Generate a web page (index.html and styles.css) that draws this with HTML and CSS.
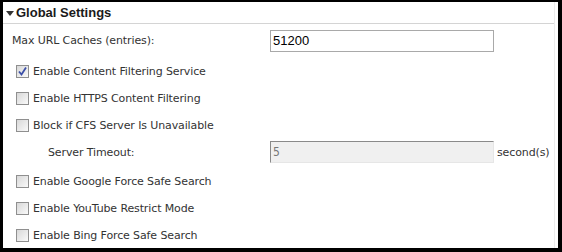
FILE: index.html
```html
<!DOCTYPE html>
<html>
<head>
<meta charset="utf-8">
<link rel="stylesheet" href="styles.css">
</head>
<body>
<div class="frame">
  <div class="panel">
    <div class="header"><span class="caret"></span>Global Settings</div>
    <div class="rows">
      <div class="row row-input">
        <label class="label">Max URL Caches (entries):</label>
        <input class="field" type="text" value="51200">
      </div>
      <div class="row row-first"><span class="cb"><svg width="11" height="11" viewBox="0 0 11 11"><path d="M2 5.5 L4.5 8.5 L9 1.5" fill="none" stroke="#3b4fa8" stroke-width="1.8"/></svg></span><span>Enable Content Filtering Service</span></div>
      <div class="row"><span class="cb"></span><span>Enable HTTPS Content Filtering</span></div>
      <div class="row"><span class="cb"></span><span>Block if CFS Server Is Unavailable</span></div>
      <div class="row row-input row-timeout">
        <label class="label label-sub">Server Timeout:</label>
        <input class="field field-disabled" type="text" value="5" disabled>
        <span class="unit">second(s)</span>
      </div>
      <div class="row"><span class="cb"></span><span>Enable Google Force Safe Search</span></div>
      <div class="row"><span class="cb"></span><span>Enable YouTube Restrict Mode</span></div>
      <div class="row"><span class="cb"></span><span>Enable Bing Force Safe Search</span></div>
    </div>
  </div>
</div>
</body>
</html>
```
FILE: styles.css
```css
html, body {
  margin: 0;
  padding: 0;
  background: #000;
}
.frame {
  width: 562px;
  height: 252px;
  box-sizing: border-box;
  border-style: solid;
  border-color: #000;
  border-width: 2px 4px 4px 3px;
  background: #fff;
  overflow: hidden;
}
.panel {
  height: 100%;
  border-right: 1px solid #ececec;
  margin-right: 3px;
  font-family: "DejaVu Sans", sans-serif;
  font-size: 11px;
  letter-spacing: -0.12px;
  color: #333;
}
.header {
  height: 21px;
  border-bottom: 1px solid #d4d4d4;
  display: flex;
  align-items: center;
  padding-left: 3px;
  font-family: "Liberation Sans", Arial, sans-serif;
  font-weight: bold;
  font-size: 13px;
  letter-spacing: 0;
  color: #1a1a1a;
}
.caret {
  width: 0;
  height: 0;
  border-left: 4px solid transparent;
  border-right: 4px solid transparent;
  border-top: 5px solid #333;
  margin-right: 2px;
  margin-top: 1px;
}
.rows {
  display: flex;
  flex-direction: column;
}
.row {
  height: 27px;
  display: flex;
  align-items: center;
  padding-left: 13px;
}
.row-first {
  margin-top: 1px;
}
.row-input {
  height: 33px;
  padding-left: 9px;
}
.row-timeout {
  height: 29px;
  padding-bottom: 3px;
  box-sizing: border-box;
}
.label {
  width: 258px;
}
.label-sub {
  padding-left: 36px;
  box-sizing: border-box;
}
.field {
  width: 224px;
  height: 22px;
  box-sizing: border-box;
  border: 1px solid #a9a9a9;
  padding: 0 2px;
  font-family: "Liberation Sans", Arial, sans-serif;
  font-size: 13px;
  letter-spacing: 0;
  color: #000;
  background: #fff;
  margin: 0;
}
.field-disabled {
  background: #f0f0f0;
  border-top-color: #8a8a8a;
  border-left-color: #8a8a8a;
  border-right-color: #e6e6e6;
  border-bottom-color: #e6e6e6;
  font-family: "DejaVu Sans Condensed", sans-serif;
  font-size: 12px;
  color: #777;
}
.unit {
  margin-left: 3px;
}
.cb {
  width: 13px;
  height: 13px;
  box-sizing: border-box;
  border: 1px solid #8f8f8f;
  background: linear-gradient(135deg, #d8d8d8 0%, #ececec 60%, #fafafa 100%);
  margin-right: 4px;
  display: flex;
  align-items: center;
  justify-content: center;
  flex: none;
}
.cb svg {
  display: block;
}
```
